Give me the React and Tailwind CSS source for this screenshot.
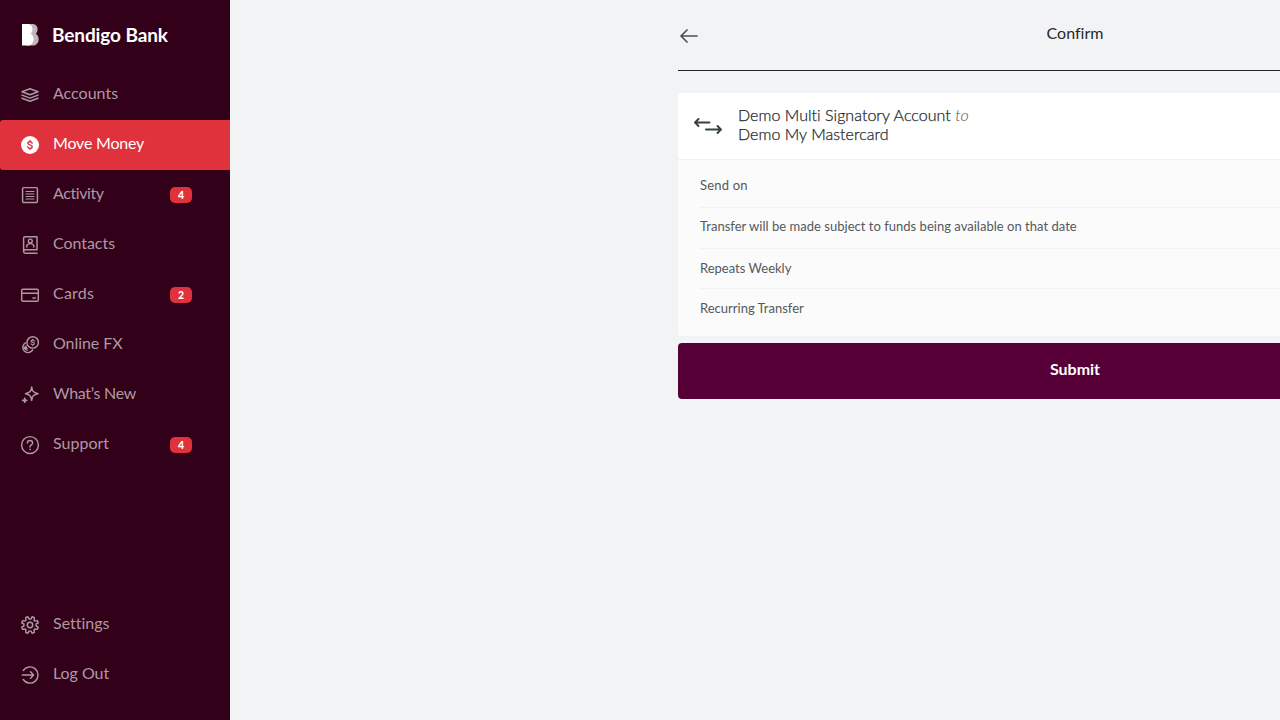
const stroke = {
  fill: "none",
  stroke: "currentColor",
  strokeWidth: 1.45,
  strokeLinecap: "round",
  strokeLinejoin: "round",
};

function Icon({ children }) {
  return (
    <svg className="size-5 shrink-0" viewBox="0 0 20 20" {...stroke}>
      {children}
    </svg>
  );
}

const icons = {
  accounts: (
    <Icon>
      <path d="M10 3.7 18 6.700 10 9.700 2 6.700Z" />
      <path d="M2 10.1 10 13.100 18 10.1" />
      <path d="M2 13.300 10 16.300 18 13.300" />
    </Icon>
  ),
  move: (
    <Icon>
      <circle cx="10" cy="10" r="9" fill="white" stroke="none" />
      <path
        stroke="#e0323c"
        d="M12.1 8.2C12 7.200 11.200 6.700 10 6.700 8.800 6.700 7.900 7.300 7.900 8.300 7.900 10.400 12.200 9.400 12.200 11.700 12.200 12.700 11.200 13.300 10 13.300 8.800 13.300 7.900 12.700 7.800 11.700M10 5.500V6.700M10 13.300V14.500"
      />
    </Icon>
  ),
  activity: (
    <Icon>
      <rect x="2.600" y="2.600" width="14.800" height="14.800" rx="1" />
      <path d="M6 6.500H14M6 9H14M6 11.500H14M6 14H14" strokeWidth="1.200" />
    </Icon>
  ),
  contacts: (
    <Icon>
      <path d="M17 14.500V1.700H5.200C4.200 1.700 3.600 2.400 3.600 3.300V16.600C3.600 17.600 4.300 18.300 5.300 18.300H17M3.800 15.700C4.100 15 4.600 14.800 5.300 14.800H17" />
      <circle cx="10.300" cy="6" r="1.900" />
      <path d="M6.800 12V11.500C6.800 9.700 8.200 8.600 10.300 8.600S13.800 9.700 13.800 11.500V12" />
    </Icon>
  ),
  cards: (
    <Icon>
      <rect x="1.700" y="4.200" width="16.600" height="12" rx="1.300" />
      <path d="M1.700 8.200H18.300M13 13H15.300" />
    </Icon>
  ),
  fx: (
    <Icon>
      <circle cx="12.700" cy="7.400" r="5.700" />
      <path d="M5.600 7.800A5.200 5.200 0 1 0 12.600 14.800" />
      <path
        strokeWidth="1.100"
        d="M14.300 6.100C14.100 5.400 13.500 5.100 12.700 5.100 11.800 5.100 11.100 5.500 11.100 6.200 11.100 7.700 14.400 7 14.400 8.600 14.400 9.300 13.700 9.700 12.700 9.700 11.800 9.700 11.200 9.400 11 8.700M12.700 4.200V5.100M12.700 9.700V10.600"
      />
      <path
        strokeWidth="1.100"
        d="M6.300 10.700C5.200 11 4.900 11.800 4.900 12.800 4.900 14.300 5.900 15.200 7.500 14.900M4 12.400H6.700M4 13.600H7"
      />
    </Icon>
  ),
  news: (
    <Icon>
      <path d="M11.700 2C12.300 6.500 13.300 7.500 18 8.700 13.300 9.800 12.300 10.900 11.700 15.500 11 10.900 10 9.800 5.500 8.700 10 7.500 11 6.500 11.700 2Z" />
      <path d="M4.700 13.400V17.200M2.800 15.300H6.600" strokeWidth="1.800" />
    </Icon>
  ),
  support: (
    <Icon>
      <circle cx="10" cy="10" r="8.400" />
      <path d="M7.400 8C7.400 6.500 8.400 5.500 10 5.500S12.600 6.500 12.600 7.900C12.600 9.900 10 9.800 10 12" />
      <circle cx="10" cy="14.300" r=".5" fill="currentColor" strokeWidth=".6" />
    </Icon>
  ),
  settings: (
    <Icon>
      <circle cx="10" cy="10" r="2.700" />
      <path d="M9 3.900 7.900 1.800C7.100 2 6.400 2.200 5.700 2.700L5.900 5.300 5.300 5.900 2.700 5.700C2.200 6.400 2 7.100 1.800 7.900L3.900 9V11L1.800 12.100C2 12.900 2.200 13.600 2.700 14.300L5.300 14.100 5.900 14.700 5.700 17.300C6.400 17.800 7.100 18 7.900 18.200L9 16.100H11L12.100 18.200C12.900 18 13.600 17.800 14.300 17.300L14.100 14.700 14.700 14.100 17.300 14.300C17.800 13.600 18 12.900 18.200 12.100L16.100 11V9L18.200 7.900C18 7.100 17.800 6.400 17.300 5.700L14.700 5.900 14.100 5.300 14.300 2.700C13.600 2.200 12.900 2 12.100 1.800L11 3.900Z" />
    </Icon>
  ),
  logout: (
    <Icon>
      <path d="M3.200 5.500A8.100 8.100 0 1 1 3.200 14.500" />
      <path d="M2.300 10H13.500M10.500 6.800 13.600 10 10.500 13.200" />
    </Icon>
  ),
};

const mainNav = [
  { label: "Accounts", icon: "accounts" },
  { label: "Move Money", icon: "move", active: true, tracking: "tracking-[-0.2px]" },
  { label: "Activity", icon: "activity", badge: 4, tracking: "tracking-[-0.4px]" },
  { label: "Contacts", icon: "contacts", tracking: "tracking-[-0.05px]" },
  { label: "Cards", icon: "cards", badge: 2, tracking: "tracking-[0.2px]" },
  { label: "Online FX", icon: "fx", tracking: "tracking-[-0.05px]" },
  { label: "What’s New", icon: "news", tracking: "tracking-[-0.3px]" },
  { label: "Support", icon: "support", badge: 4 },
];

const footerNav = [
  { label: "Settings", icon: "settings" },
  { label: "Log Out", icon: "logout", tracking: "tracking-[-0.05px]" },
];

function NavItem({ label, icon, active, badge, tracking = "" }) {
  return (
    <a
      className={`flex h-[50px] items-center pl-5 pr-[38px] ${
        active ? "rounded-l-[3px] bg-[#e0323c] text-white" : "text-[#ad99a3]"
      }`}
    >
      {icons[icon]}
      <span className={`ml-[13px] pb-1 text-base leading-6 ${tracking}`}>{label}</span>
      {badge && (
        <span className="ml-auto flex h-4 w-[22px] items-center justify-center rounded-[5px] bg-[#e0323c] pb-px text-[10.5px] leading-4 font-black text-white">
          {badge}
        </span>
      )}
    </a>
  );
}

function Brand() {
  return (
    <div className="flex h-[70px] items-center pl-[22px]">
      <svg className="h-[22px] w-[17px]" viewBox="0 0 17 22">
        <path
          fill="#c4b3bc"
          d="M4 0H10.500C13.500 0 15.600 2.200 15.600 5.200 15.600 7 15 8.600 13.800 9.700 15.600 10.900 16.700 12.900 16.700 15.200 16.700 19 14 21.600 10.500 21.600H4Z"
        />
        <path
          fill="white"
          d="M0 0H5.500C8.500 0 10.500 2.200 10.500 5.200 10.500 7 10 8.600 8.800 9.700 10.500 10.900 11.600 12.900 11.600 15.200 11.600 19 9 21.600 5.500 21.600H0Z"
        />
      </svg>
      <span className="ml-[13px] text-[19px] leading-6 font-bold tracking-[-0.1px] text-white">
        Bendigo Bank
      </span>
    </div>
  );
}

function Detail({ children, className }) {
  return (
    <div className={`flex items-center text-[13px] leading-4 text-[#54595d] ${className}`}>
      {children}
    </div>
  );
}

export default function App() {
  return (
    <div className="flex h-screen w-full overflow-hidden bg-[#f2f3f5] font-['Lato',sans-serif] [font-variant-ligatures:none]">
      <aside className="flex w-[230px] shrink-0 flex-col bg-[#330019]">
        <Brand />
        <nav className="flex flex-col">
          {mainNav.map((item) => (
            <NavItem key={item.label} {...item} />
          ))}
        </nav>
        <nav className="mt-auto mb-5 flex flex-col">
          {footerNav.map((item) => (
            <NavItem key={item.label} {...item} />
          ))}
        </nav>
      </aside>

      <main className="ml-[448px] w-[794px] shrink-0">
        <header className="grid h-[71px] grid-cols-[24px_1fr_24px] items-center border-b border-[#24282b]">
          <svg
            className="mt-0.5 ml-0.5 h-4 w-[18px] text-[#4a5357]"
            viewBox="0 0 18 16"
            {...stroke}
            strokeWidth="1.700"
          >
            <path d="M17 8H1.200M7 2 1 8 7 14" />
          </svg>
          <h1 className="pb-1 text-center text-base leading-6 text-[#24282b]">Confirm</h1>
        </header>

        <section className="mt-[22px] overflow-hidden rounded-[3px] bg-[#fbfbfb]">
          <div className="flex h-[67px] items-center border-b border-[#f1f2f3] bg-white pl-4">
            <svg
              className="h-4 w-7 text-[#374045]"
              viewBox="0 0 28 16"
              {...stroke}
              strokeWidth="1.900"
            >
              <path d="M15.500 4.500H1.200M4.500 1 1 4.500 4.500 8M12 11.500H26.800M23.500 8 27 11.500 23.500 15" />
            </svg>
            <p className="ml-4 pb-[5px] text-base leading-[19px] font-light tracking-[0.04px] text-[#24282b] [-webkit-text-stroke:0.25px]">
              Demo Multi Signatory Account <i className="text-[#4d5357] [-webkit-text-stroke:0]">to</i>
              <br />
              Demo My Mastercard
            </p>
          </div>
          <div className="flex h-[176px] flex-col divide-y divide-[#f1f2f3] pl-[22px]">
            <Detail className="h-12 pt-[3px] tracking-[0.2px]">Send on</Detail>
            <Detail className="h-[41px] pb-1 tracking-[0.02px]">
              Transfer will be made subject to funds being available on that date
            </Detail>
            <Detail className="h-10 pb-[2px]">Repeats Weekly</Detail>
            <Detail className="h-[38px] pb-px">Recurring Transfer</Detail>
          </div>
        </section>

        <button className="mt-[7px] flex h-14 w-full items-center justify-center rounded-[4px] bg-[#570038] pb-[5px] text-base leading-6 font-bold text-white">
          Submit
        </button>
      </main>
    </div>
  );
}
